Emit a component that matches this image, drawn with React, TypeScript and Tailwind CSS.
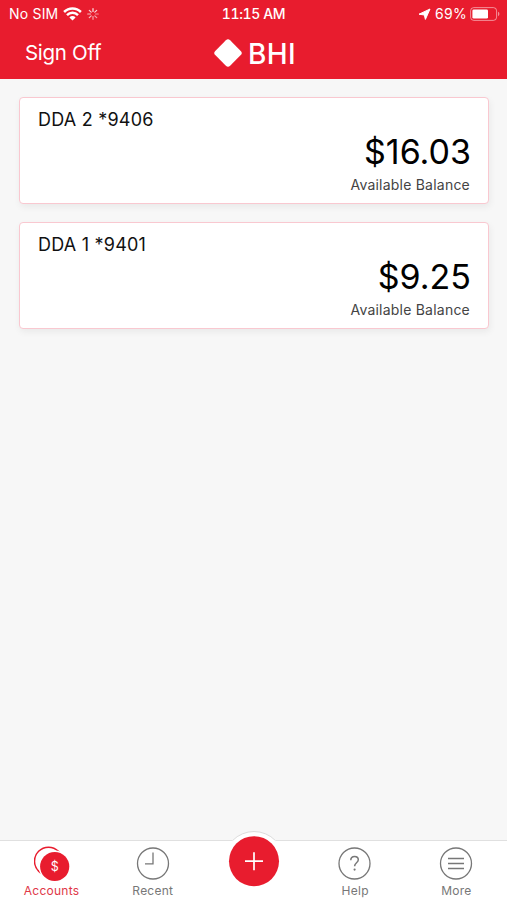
import React from 'react';

interface Account {
  name: string;
  balance: string;
}

const accounts: Account[] = [
  { name: 'DDA 2 *9406', balance: '$16.03' },
  { name: 'DDA 1 *9401', balance: '$9.25' },
];

const StatusBar: React.FC = () => (
  <div className="grid h-7 grid-cols-3 items-center text-[14px] leading-none">
    <div className="flex items-center pl-[9px]">
      <span className="tracking-[0.2px]">No SIM</span>
      <svg className="ml-[5px]" width="19" height="14" viewBox="0 0 19 14" fill="none" stroke="currentColor" strokeWidth="2.5">
        <path d="M1.1 5a11.9 11.9 0 0 1 16.8 0" />
        <path d="M4 8.1a7.8 7.8 0 0 1 11 0" />
        <path d="M9.5 13.4 6.4 10.4a4.4 4.4 0 0 1 6.2 0z" fill="currentColor" stroke="none" />
      </svg>
      <svg className="ml-[5px]" width="12" height="12" viewBox="0 0 12 12" stroke="currentColor" strokeWidth="1.2" strokeLinecap="round">
        <path d="M6 .7v2.8" opacity=".9" />
        <path d="m9.7 2.3-1.9 1.9" opacity=".8" />
        <path d="M11.3 6H8.5" opacity=".5" />
        <path d="M9.7 9.7 7.8 7.8" opacity=".6" />
        <path d="M6 11.3V8.5" opacity=".6" />
        <path d="m2.3 9.7 1.9-1.9" opacity=".7" />
        <path d="M.7 6h2.8" opacity=".7" />
        <path d="m2.3 2.3 1.9 1.9" opacity=".8" />
      </svg>
    </div>
    <div className="text-center font-medium tabular-nums tracking-[-0.4px]">11:15 AM</div>
    <div className="flex items-center justify-end pr-[7px]">
      <svg width="13" height="13" viewBox="0 0 13 13" fill="currentColor" stroke="currentColor" strokeWidth="1" strokeLinejoin="round">
        <path d="M12 1 7.4 11.4 6.3 7 1 6.2z" />
      </svg>
      <span className="ml-1 tracking-[0.3px]">69%</span>
      <svg className="ml-[3px]" width="30" height="14" viewBox="0 0 30 14">
        <rect x=".6" y=".6" width="26" height="12.8" rx="3.2" fill="none" stroke="currentColor" strokeOpacity=".5" />
        <rect x="2.4" y="2.4" width="15.6" height="9.2" rx="1.4" fill="currentColor" />
        <path d="M28 4.8a2.4 2.4 0 0 1 0 4.4z" fill="currentColor" fillOpacity=".5" />
      </svg>
    </div>
  </div>
);

const Header: React.FC = () => (
  <header className="h-[79px] bg-[#e81c2e] text-white">
    <StatusBar />
    <div className="grid h-[50px] grid-cols-3 items-center">
      <span className="pl-[25px] text-[20.5px] leading-none tracking-[-0.3px]">Sign Off</span>
      <div className="flex items-center justify-center pl-[2px]">
        <svg width="30" height="30" viewBox="0 0 30 30">
          <rect x="4.5" y="4.5" width="21" height="21" rx="3" fill="currentColor" transform="rotate(45 15 15)" />
        </svg>
        <span className="ml-[5px] pt-[2px] text-[28px] leading-none font-medium tracking-[0.4px]">BHI</span>
      </div>
    </div>
  </header>
);

const AccountCard: React.FC<{ account: Account }> = ({ account }) => (
  <div className="flex h-[107px] flex-col rounded-[4px] border border-[#f9c8d0] bg-white px-[18px] pt-3 shadow-[1px_3px_7px_rgba(0,0,0,0.06)]">
    <div className="text-[18px] leading-[19px] tracking-[0.22px] text-[#111]">{account.name}</div>
    <div className="mt-[2px] -mr-px text-right text-[34px] leading-[42px] text-black">{account.balance}</div>
    <div className="mt-1 text-right text-[14px] leading-[16px] tracking-[0.22px] text-[#444]">Available Balance</div>
  </div>
);

const AccountsIcon: React.FC = () => (
  <svg width="36" height="36" viewBox="0 0 36 36">
    <circle cx="14.5" cy="15.2" r="14" fill="none" stroke="#e81c2e" strokeWidth="1.5" />
    <circle cx="20.7" cy="20.5" r="16" fill="#fff" />
    <circle cx="20.7" cy="20.5" r="14.6" fill="#e81c2e" />
    <text x="20.7" y="25" textAnchor="middle" fontSize="12.5" fill="#fff">$</text>
  </svg>
);

const RecentIcon: React.FC = () => (
  <svg width="34" height="34" viewBox="0 0 34 34" fill="none" stroke="currentColor" strokeWidth="1.3">
    <circle cx="17" cy="16.5" r="15.5" />
    <path d="M17 5.5v11.3H9" />
  </svg>
);

const HelpIcon: React.FC = () => (
  <svg width="34" height="34" viewBox="0 0 34 34" fill="none" stroke="currentColor" strokeWidth="1.3">
    <circle cx="16.5" cy="16.5" r="15.5" />
    <path d="M12.8 13.2c0-2.3 1.6-3.8 3.8-3.8 2.1 0 3.7 1.3 3.7 3.3 0 3.2-3.7 3-3.7 6.6" strokeWidth="1.5" />
    <circle cx="16.6" cy="22.6" r="1.1" fill="currentColor" stroke="none" />
  </svg>
);

const MoreIcon: React.FC = () => (
  <svg width="34" height="34" viewBox="0 0 34 34" fill="none" stroke="currentColor" strokeWidth="1.3">
    <circle cx="17" cy="16.5" r="15.5" />
    <path d="M9 11.5h16M9 16.5h16M9 21.5h16" strokeWidth="1.5" />
  </svg>
);

interface TabProps {
  label: string;
  icon: React.ReactNode;
  active?: boolean;
}

const Tab: React.FC<TabProps> = ({ label, icon, active }) => (
  <button className={`flex flex-col items-center pt-[5px] ${active ? 'text-[#e03848]' : 'text-[#777]'}`}>
    <span className="flex h-9 items-center">{icon}</span>
    <span className="mt-[2px] text-[12px] leading-[14px] tracking-[0.25px]">{label}</span>
  </button>
);

const TabBar: React.FC = () => (
  <nav className="grid h-[60px] grid-cols-5 border-t border-[#e0e0e0] bg-white pl-px">
    <Tab label="Accounts" icon={<AccountsIcon />} active />
    <Tab label="Recent" icon={<RecentIcon />} />
    <div className="flex justify-center">
      <svg className="relative -top-[11px]" width="62" height="62" viewBox="0 0 62 62">
        <circle cx="31" cy="31.5" r="30" fill="#fff" />
        <path d="M9.6 10.5a30 30 0 0 1 42.8 0" fill="none" stroke="#dcdcdc" />
        <circle cx="31" cy="31.2" r="25" fill="#e81c2e" />
        <path d="M31 22.2v18M22 31.2h18" stroke="#fff" strokeWidth="1.7" />
      </svg>
    </div>
    <Tab label="Help" icon={<HelpIcon />} />
    <Tab label="More" icon={<MoreIcon />} />
  </nav>
);

export default function App() {
  return (
    <div className="flex h-screen flex-col bg-[#f7f7f7] font-['Inter',sans-serif] [font-feature-settings:'calt'_0]">
      <Header />
      <main className="flex flex-1 flex-col gap-[17.5px] pt-[18px] pr-[18px] pl-[19px]">
        {accounts.map((account) => (
          <AccountCard key={account.name} account={account} />
        ))}
      </main>
      <TabBar />
    </div>
  );
}
